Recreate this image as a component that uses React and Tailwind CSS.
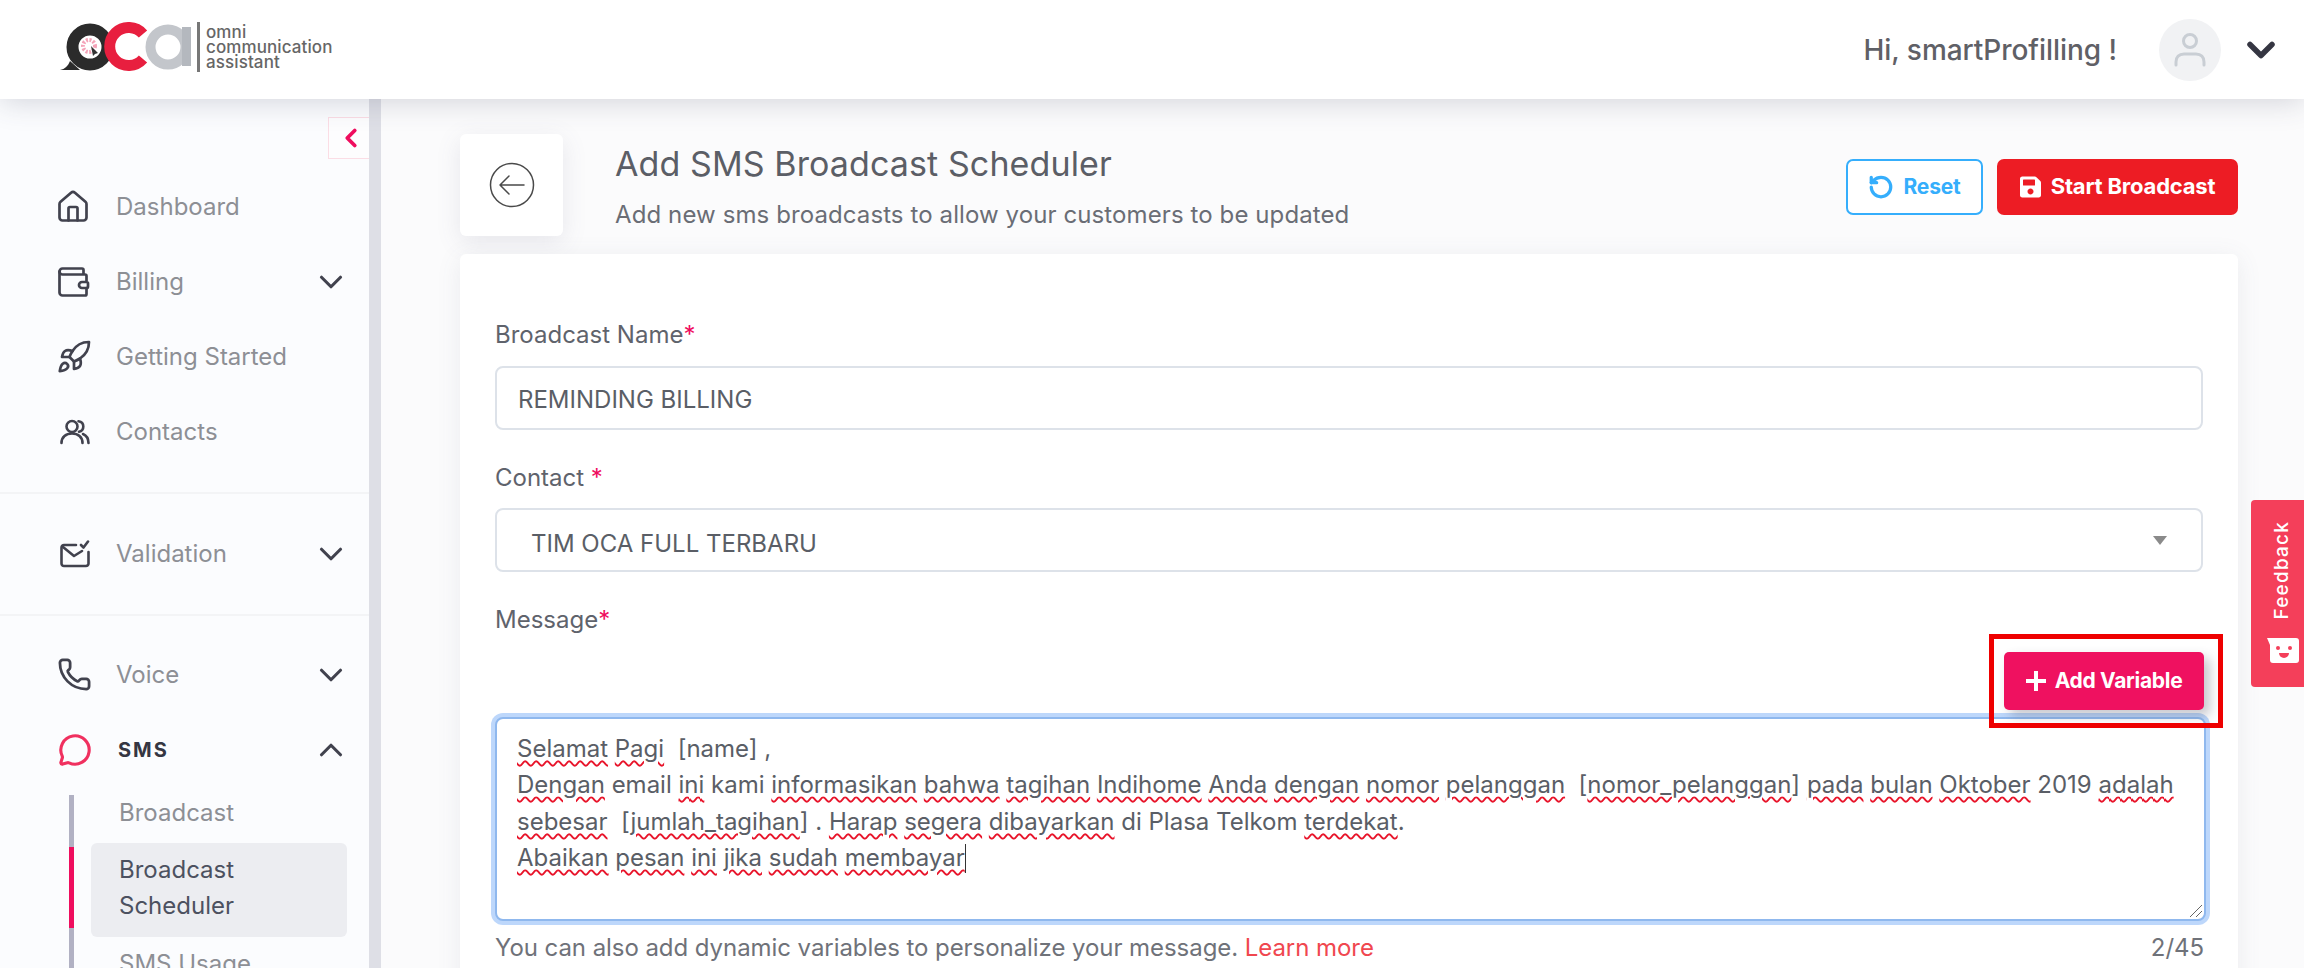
import React from "react";
import { House, Wallet, Rocket, Phone, MessageCircle, ChevronDown, ChevronUp, ChevronLeft, RotateCcw } from "lucide-react";

const font = { fontFamily: "Inter, 'Noto Sans', sans-serif" };

function Users2(p) {
  return (
    <svg viewBox="0 0 30 26" fill="none" stroke="currentColor" strokeWidth="2.6" strokeLinecap="round" {...p}>
      <circle cx="12" cy="7.5" r="5.5" />
      <path d="M1.5 24c0-6 4.5-9.5 10.5-9.5S22.5 18 22.5 24" />
      <path d="M18.5 2.2c3 .4 4.8 2.6 4.8 5.3 0 2.6-1.700 4.700-4.300 5.300" />
      <path d="M23 15c3.500 1.500 5.500 4.500 5.500 9" />
    </svg>
  );
}
function MailChecked(p) {
  return (
    <svg viewBox="0 0 30 28" fill="none" stroke="currentColor" strokeWidth="2.6" strokeLinecap="round" strokeLinejoin="round" {...p}>
      <path d="M16 5H4a2.500 2.500 0 0 0-2.500 2.500v16A2.500 2.500 0 0 0 4 26h22a2.500 2.500 0 0 0 2.500-2.500V12" />
      <path d="M3 7l11 9 8-5" />
      <path d="M21 5l2.500 2.500L28 1.500" />
    </svg>
  );
}
function Floppy(p) {
  return (
    <svg viewBox="0 0 448 512" fill="currentColor" {...p}>
      <path d="M433.900 129.900l-83.900-83.900A48 48 0 0 0 316.100 32H48C21.500 32 0 53.500 0 80v352c0 26.500 21.500 48 48 48h352c26.500 0 48-21.500 48-48V163.900a48 48 0 0 0-14.100-34zM224 416c-35.300 0-64-28.700-64-64 0-35.300 28.700-64 64-64s64 28.700 64 64c0 35.300-28.700 64-64 64zm96-304.500V212c0 6.600-5.400 12-12 12H76c-6.600 0-12-5.400-12-12V108c0-6.600 5.400-12 12-12h228.500c3.200 0 6.200 1.300 8.500 3.500l3.500 3.500c2.200 2.200 3.500 5.300 3.500 8.500z" />
    </svg>
  );
}
function Logo() {
  return (
    <div className="flex items-center -mt-[5px]">
      <svg width="136" height="50" viewBox="0 0 136 50">
        <circle cx="30" cy="25" r="17.500" fill="#fff" stroke="#2b2b2b" strokeWidth="12" />
        <path d="M0 48c5-1 8-4 10-9l10 9z" fill="#2b2b2b" />
        <circle cx="29" cy="24" r="6" fill="none" stroke="#f4a3b8" strokeWidth="4" strokeDasharray="2 1.500" />
        <path d="M31 24l7 7-3 1 -2 2z" fill="#333" />
        <path d="M83 12a19 19 0 1 0 0 25" fill="none" stroke="#e81f3f" strokeWidth="11" />
        <circle cx="108" cy="25" r="17.500" fill="none" stroke="#c3c6cb" strokeWidth="10" />
        <rect x="122" y="5" width="9" height="39" fill="#b4b8be" />
      </svg>
      <div className="w-[3px] h-[50px] bg-[#777] ml-[1px] mr-[6px]" />
      <div className="text-[17px] leading-[15px] font-medium text-[#666] tracking-[0.1px]">
        <div>omni</div>
        <div>communication</div>
        <div>assistant</div>
      </div>
    </div>
  );
}

function NavItem({ icon, label, chevron }) {
  return (
    <div className="h-[75px] flex items-center pl-[60px] pr-[19px] text-[#8d8f95]">
      <div className="w-[56px] text-[#41424e] flex items-center">{icon}</div>
      <span className="flex-1 text-[24px]">{label}</span>
      {chevron && <ChevronDown className="w-[38px] h-[38px] text-[#41424e]" strokeWidth={2} />}
    </div>
  );
}

function W({ children }) {
  return <span className="underline decoration-wavy decoration-[#e8142a] decoration-[1.5px] underline-offset-[3px]">{children}</span>;
}

export default function App() {
  return (
    <div style={font} className="relative h-[968px] w-[2304px] overflow-hidden flex flex-col bg-[#fbfbfc]">
      <header className="relative z-10 h-[99px] shrink-0 bg-white shadow-[0_2px_28px_rgba(60,65,90,0.22)] flex items-center pl-[60px] pr-[21px] justify-between">
        <Logo />
        <div className="flex items-center">
          <span className="text-[28px] font-medium text-[#5f6066] tracking-[-0.05px]">Hi, smartProfilling !</span>
          <div className="ml-[42px] w-[62px] h-[62px] rounded-full bg-[#f1f2f4] flex items-center justify-center">
            <svg width="32" height="36" viewBox="0 0 32 36" fill="none" stroke="#c9ced4" strokeWidth="3" strokeLinecap="round">
              <circle cx="16" cy="9" r="6.500" />
              <path d="M2 33v-3c0-5 3-8 8-8h12c5 0 8 3 8 8v3" />
            </svg>
          </div>
          <ChevronDown className="ml-[18px] w-[44px] h-[44px] text-[#353642]" strokeWidth={3} />
        </div>
      </header>

      <div className="flex flex-1 min-h-0">
        <aside className="relative w-[381px] shrink-0 flex overflow-hidden">
          <div className="w-[369px] bg-[#fbfcfe] pt-[70px] overflow-hidden">
            <NavItem icon={<House className="w-[36px] h-[36px] -ml-[5px]" strokeWidth={1.8} />} label="Dashboard" />
            <NavItem icon={<Wallet className="w-[36px] h-[36px] -ml-[5px]" strokeWidth={1.8} />} label="Billing" chevron />
            <NavItem icon={<Rocket className="w-[36px] h-[36px] -ml-[4px]" strokeWidth={1.8} />} label="Getting Started" />
            <NavItem icon={<Users2 className="w-[30px] h-[26px]" />} label="Contacts" />
            <div className="mt-[23px] mb-[22px] h-[2px] bg-[#f3f4f6]" />
            <NavItem icon={<MailChecked className="w-[30px] h-[28px]" />} label="Validation" chevron />
            <div className="mt-[23px] mb-[21px] h-[2px] bg-[#f3f4f6]" />
            <NavItem icon={<Phone className="w-[35px] h-[35px] -ml-[3px]" strokeWidth={1.9} />} label="Voice" chevron />
            <div className="h-[75px] flex items-center pl-[60px] pr-[19px]">
              <div className="w-[56px] flex items-center text-[#f0305f]">
                <MessageCircle className="w-[34px] h-[34px] -ml-[2px]" strokeWidth={2.2} />
              </div>
              <span className="flex-1 ml-[2px] text-[20px] font-bold tracking-[2px] text-[#353642]">SMS</span>
              <ChevronUp className="w-[38px] h-[38px] text-[#41424e]" strokeWidth={2} />
            </div>
            <div className="relative ml-[69px] mt-[12px] pl-[22px] mr-[22px] text-[24px] leading-[36px]">
              <div className="absolute left-0 top-0 bottom-0 w-[5px] bg-[#b1b1c3]" />
              <div className="absolute left-0 top-[52px] h-[81px] w-[5px] bg-[#ef0d5e]" />
              <div className="pl-[28px] h-[44px] -mt-[4px] text-[#8d8f95]">Broadcast</div>
              <div className="pl-[28px] py-[9px] mt-[4px] rounded-[6px] bg-[#ecedf1] text-[#4c5160] h-[94px]">
                Broadcast
                <br />
                Scheduler
              </div>
              <div className="pl-[28px] pt-[9px] h-[60px] text-[#8d8f95]">SMS Usage</div>
            </div>
          </div>
          <div className="w-[12px] bg-[#dedfe6]" />
          <div className="absolute left-[328px] top-[18px] w-[41px] h-[42px] bg-[#fdfdfe] border border-r-0 border-[#fbdde5] flex items-center justify-center">
            <ChevronLeft className="w-[30px] h-[30px] text-[#ef0d5e] ml-[3px]" strokeWidth={3} />
          </div>
        </aside>

        <main className="flex-1 min-w-0 pl-[79px] pr-[66px] pt-[35px]">
          <div className="flex items-center h-[102px]">
            <div className="w-[103px] h-[102px] rounded-[6px] bg-white shadow-[0_6px_24px_rgba(90,95,120,0.13)] flex items-center justify-center">
              <svg width="46" height="46" viewBox="0 0 46 46" fill="none" stroke="#4a4a4a" strokeWidth="1.500" strokeLinecap="round" strokeLinejoin="round">
                <circle cx="23" cy="23" r="21.500" />
                <path d="M35 23H11M20 14l-9 9 9 9" />
              </svg>
            </div>
            <div className="ml-[52px] flex-1">
              <div className="text-[34px] leading-[40px] text-[#5b5e66] tracking-[0.1px]">Add SMS Broadcast Scheduler</div>
              <div className="mt-[17px] -mb-[3px] text-[24px] leading-[28px] text-[#6a6d75] tracking-[0.1px]">Add new sms broadcasts to allow your customers to be updated</div>
            </div>
            <div className="flex items-center gap-[14px] mt-[3px]">
              <button className="w-[137px] h-[56px] rounded-[7px] bg-white border-2 border-[#35aefc] text-[#35aefc] flex items-center justify-center gap-[9px] text-[21px] font-bold tracking-[-0.2px]">
                <RotateCcw className="w-[26px] h-[26px]" strokeWidth={3} />
                Reset
              </button>
              <button className="w-[241px] h-[56px] rounded-[7px] bg-[#ed1c24] text-white flex items-center justify-center gap-[10px] text-[22px] font-bold tracking-[-0.2px]">
                <Floppy className="w-[21px] h-[24px]" />
                Start Broadcast
              </button>
            </div>
          </div>

          <section className="relative mt-[18px] h-[760px] rounded-t-[6px] bg-white shadow-[0_4px_24px_rgba(90,95,120,0.10)] px-[35px] pt-[64px] text-[24px] text-[#5f636c]">
            <label className="block leading-[34px]">
              Broadcast Name<span className="text-[#ef0d5e]">*</span>
            </label>
            <div className="mt-[14px] h-[64px] rounded-[8px] border-2 border-[#dde2e9] flex items-center pl-[21px] text-[#5a5e66]">
              <span className="mt-[3px]">REMINDING BILLING</span>
            </div>
            <label className="mt-[31px] block leading-[34px]">
              Contact <span className="text-[#ef0d5e]">*</span>
            </label>
            <div className="mt-[13px] h-[64px] rounded-[8px] border-2 border-[#dde2e9] flex items-center justify-between pl-[34px] pr-[34px] text-[#5a5e66]">
              <span className="mt-[7px]">TIM OCA FULL TERBARU</span>
              <svg width="14" height="9" viewBox="0 0 14 9">
                <path d="M0 0h14L7 9z" fill="#8a8a8a" />
              </svg>
            </div>
            <label className="mt-[31px] block leading-[34px]">
              Message<span className="text-[#ef0d5e]">*</span>
            </label>

            <div className="relative mt-[80px] w-[1711px] h-[204px] rounded-[8px] border-2 border-[#8fb8ee] ring-[4px] ring-[#bdd7fb] bg-white pl-[20px] pt-[12px] text-[24px] leading-[36.4px] text-[#5a5e66] whitespace-pre">
              <div><W>Selamat</W> <W>Pagi</W>  [name] ,</div>
              <div><W>Dengan</W> email <W>ini</W> kami <W>informasikan</W> <W>bahwa</W> <W>tagihan</W> <W>Indihome</W> <W>Anda</W> <W>dengan</W> <W>nomor</W> <W>pelanggan</W>  [<W>nomor_pelanggan</W>] <W>pada</W> <W>bulan</W> <W>Oktober</W> 2019 <W>adalah</W></div>
              <div><W>sebesar</W>  [<W>jumlah_tagihan</W>] . <W>Harap</W> <W>segera</W> <W>dibayarkan</W> di Plasa Telkom <W>terdekat</W>.</div>
              <div className="flex items-center"><span><W>Abaikan</W> <W>pesan</W> <W>ini</W> <W>jika</W> <W>sudah</W> <W>membayar</W></span><span className="w-[1px] h-[29px] bg-[#333]" /></div>
              <svg className="absolute right-[1px] bottom-[1px]" width="14" height="14" viewBox="0 0 14 14" stroke="#666" strokeWidth="1">
                <path d="M1 13L13 1M7 13l6-6" />
              </svg>
            </div>

            <div className="mt-[10px] w-[1709px] flex justify-between leading-[34px] text-[#6f7279] tracking-[-0.06px]">
              <span>
                You can also add dynamic variables to personalize your message. <span className="text-[#f0474f]">Learn more</span>
              </span>
              <span>2/45</span>
            </div>

            <div className="absolute right-[34px] top-[398px] w-[200px] h-[58px] rounded-[5px] bg-[#ef1160] shadow-[6px_6px_12px_rgba(70,70,90,0.30)] text-white flex items-center justify-center gap-[9px] text-[21px] font-bold tracking-[-0.3px]">
              <svg width="20" height="20" viewBox="0 0 20 20" stroke="#fff" strokeWidth="4">
                <path d="M10 0v20M0 10h20" />
              </svg>
              Add Variable
            </div>
            <div className="absolute right-[15px] top-[380px] w-[234px] h-[94px] border-[5px] border-[#ee0000]" />
          </section>
        </main>
      </div>

      <div className="absolute right-0 top-[500px] w-[53px] h-[187px] rounded-l-[4px] bg-[#f43f5a] flex flex-col items-center pl-[10px] text-white">
        <span className="mt-[21px] text-[19px] font-medium tracking-[1.2px] [writing-mode:vertical-rl] rotate-180">Feedback</span>
        <svg className="mt-[17px]" width="32" height="26" viewBox="0 0 32 26">
          <path d="M0 1h29a3 3 0 0 1 3 3v19a3 3 0 0 1-3 3H6a3 3 0 0 1-3-3V8z" fill="#fff" />
          <circle cx="11" cy="11" r="2" fill="#f43f5a" />
          <circle cx="23" cy="11" r="2" fill="#f43f5a" />
          <path d="M12 16h10a5 5 0 0 1-10 0z" fill="#f43f5a" />
        </svg>
      </div>
    </div>
  );
}
